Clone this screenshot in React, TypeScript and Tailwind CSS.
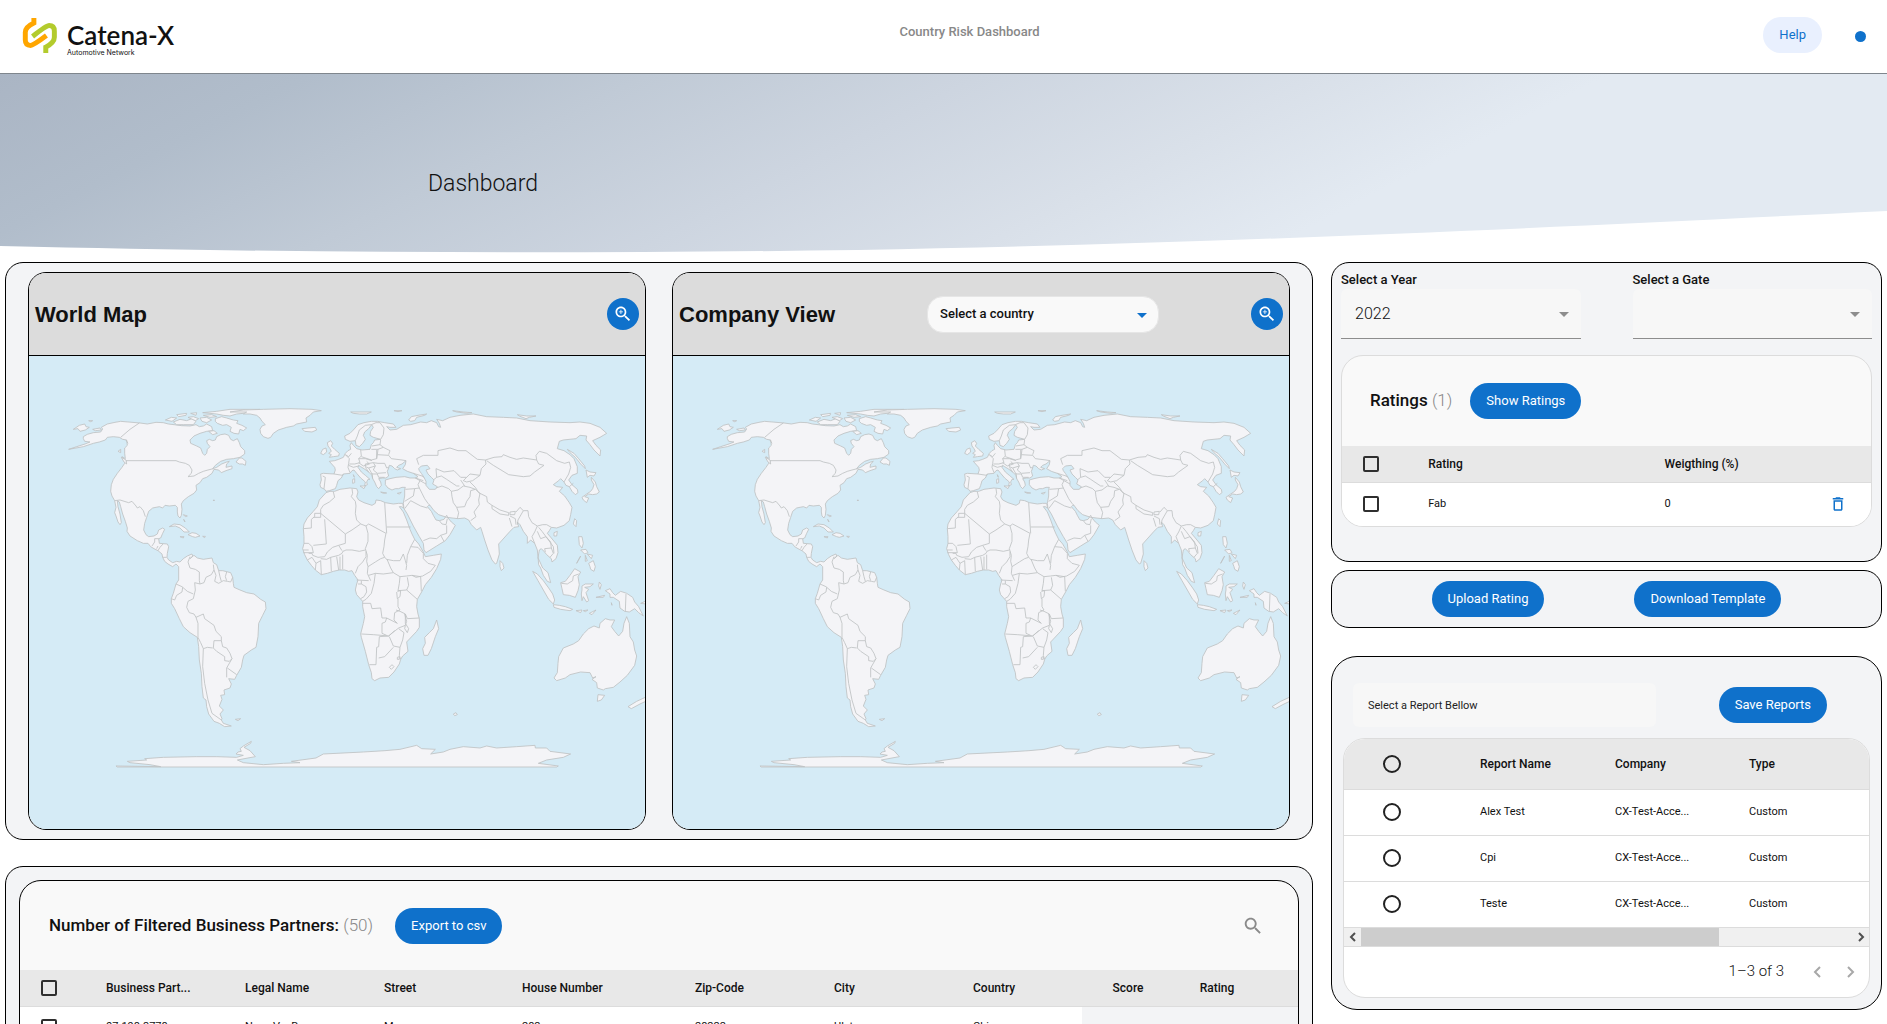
import type { ReactNode } from "react";

const LAND_WEST = [
  "M160,140 172,133 190,128 212,126 218,117 214,112 232,102 255,97 272,94 330,99 352,102 378,97 400,98 415,102 432,104 455,107 480,108 498,104 508,110 520,108 530,102 545,110 548,122 530,124 510,130 492,138 480,150 482,160 500,168 512,174 518,190 524,196 530,190 532,178 540,170 532,160 530,152 538,148 548,152 556,150 560,140 572,134 585,132 596,136 602,148 610,152 622,146 628,158 632,170 644,182 644,192 630,202 610,206 590,208 572,214 556,226 548,236 560,232 575,222 590,216 598,214 590,222 588,232 606,228 606,236 588,242 574,248 566,240 552,238 546,250 530,262 518,266 510,278 498,286 500,300 492,310 475,320 460,332 454,342 456,358 454,376 450,384 444,378 442,366 442,352 436,346 418,348 405,346 398,354 388,350 368,354 356,364 350,382 344,400 341,420 348,434 356,440 372,438 382,432 386,420 398,414 404,418 398,430 392,444 386,446 388,460 400,461 412,462 416,470 412,490 411,502 416,510 428,518 440,514 450,516 460,506 472,498 486,492 488,498 480,506 492,496 502,504 520,508 546,504 550,518 560,524 566,542 578,542 602,548 608,562 610,580 612,592 630,600 650,608 672,612 692,628 706,636 708,656 698,676 686,700 684,740 678,772 664,780 642,796 638,810 634,832 620,856 614,868 596,866 604,882 600,894 582,900 584,914 572,916 576,928 568,948 580,960 570,972 576,986 574,990 580,1000 604,1008 584,1010 568,1000 552,994 536,972 530,950 528,930 520,924 516,890 514,850 508,810 506,770 502,742 480,728 460,710 448,686 434,656 424,640 424,626 430,610 438,582 446,570 446,540 446,530 438,522 428,530 414,522 404,514 398,502 396,492 384,482 372,476 362,470 354,460 340,460 322,452 300,438 291,424 292,414 286,394 278,372 272,350 268,336 262,332 264,350 270,372 274,398 270,404 264,396 258,378 254,368 258,352 254,332 246,318 242,304 244,284 250,268 262,250 276,232 284,220 290,212 280,210 276,200 286,206 284,190 284,174 292,166 290,150 278,148 268,142 250,140 232,142 226,150 208,156 190,160 160,170 116,178 140,170 165,162 180,156 164,154 160,146Z",
  "M618,216 628,204 636,204 648,214 646,226 638,222 628,222Z",
  "M556,86 575,80 590,84 610,90 624,92 620,100 636,106 650,114 640,122 630,118 626,132 612,130 600,124 604,112 590,104 578,106 562,100 556,94Z",
  "M430,96 450,88 470,92 486,86 498,94 490,104 460,104 440,104Z",
  "M406,90 424,82 440,84 426,94Z M440,74 470,70 468,76 446,80Z M474,82 490,80 506,86 496,92Z M482,70 500,68 498,76Z",
  "M518,68 560,64 600,58 690,58 670,66 640,70 620,72 600,78 580,76 560,72Z",
  "M510,84 530,82 545,90 530,98 516,94Z M536,124 552,122 562,130 548,134Z M520,76 545,74 560,80 540,82Z",
  "M600,66 640,60 700,58 780,56 846,58 874,62 850,66 840,76 828,84 830,96 800,102 790,108 770,112 745,120 730,130 722,142 714,145 700,140 692,130 690,118 696,108 706,104 696,94 690,84 680,76 660,72 640,72 650,66Z",
  "M816,116 834,114 856,112 860,120 846,126 824,124Z",
  "M418,410 432,402 450,404 466,414 478,426 462,426 450,414 436,408Z M474,434 486,428 498,430 510,438 496,442 488,440Z M450,440 462,440 460,444Z M518,439 526,439 524,443Z M460,374 472,378 466,380Z M461,388 465,396Z",
  "M130,118 148,106 164,102 168,110 178,112 166,120 150,124 144,116Z M176,92 188,92 182,95Z M188,118 210,114 214,120 196,122Z M264,184 272,178 272,188Z M274,202 288,210 290,222 282,216Z M549,331 554,331Z",
  "M616,988 632,986 624,992Z",
  "M258,1128 392,1130 360,1124 300,1118 292,1114 350,1110 344,1106 400,1102 500,1100 560,1100 620,1102 640,1096 618,1092 624,1086 634,1084 630,1076 640,1068 664,1054 662,1060 642,1072 660,1082 676,1100 654,1104 622,1110 640,1118 700,1124 760,1120 810,1118 784,1114 858,1104 880,1092 960,1088 1000,1086 1065,1082 1110,1078 1160,1066 1175,1076 1216,1078 1202,1092 1240,1086 1260,1078 1300,1070 1350,1074 1370,1068 1400,1074 1460,1070 1515,1066 1516,1074 1550,1074 1560,1084 1622,1092 1600,1102 1550,1110 1525,1120 1585,1128 1580,1131 262,1131Z",
];

const BORDERS_WEST =
  "M328,99 300,118 272,142M288,150 294,160M290,212 438,212 448,216 466,220 478,226 486,240 484,250 474,260 492,258 506,250 520,244 534,240 550,236M254,332 270,330 296,338 306,334 318,348 322,354 330,350 340,362 346,380M366,468 374,456 374,446 386,446M384,482 390,472 400,461M398,502 410,502M380,476 384,468M480,500 474,516 480,534 496,538 508,546 508,572 510,582 522,578 528,562 544,554 552,540 550,524M552,540 558,556 554,574 566,580 580,572 592,574 602,576 608,562M566,542 570,560 574,574M590,546 586,560 590,572M510,582 494,578 496,600 490,626 474,634 470,652 478,668 492,672 498,682 504,700 504,742M438,582 456,590 472,604 490,612M458,592 456,606 440,616 434,630 424,626M498,682 520,672 524,686 552,706 558,724 574,740 574,752M504,742 512,758 520,776 532,772 548,774M550,774 552,752 574,752 578,770 590,774 600,790 606,806 598,814 584,812 584,800 560,784 550,774M606,806 590,834 590,862M592,834 620,854M520,776 518,830 524,880 534,930 546,970 574,990";

const LAND_EAST = [
  "M92,252 100,250 132,252 136,240 134,232 118,214 134,212 146,208 160,202 166,190 174,182 182,178 180,166 184,158 190,166 200,176 216,180 240,178 244,164 250,158 254,150 272,148 250,142 240,136 242,124 250,112 245,104 236,116 224,126 220,136 226,148 218,160 208,170 198,166 196,152 180,154 166,148 164,138 180,130 190,120 204,104 222,98 244,94 262,94 284,98 310,102 318,112 300,112 290,110 300,120 320,118 340,106 362,104 392,96 410,98 424,92 440,98 446,110 452,112 448,100 440,88 458,92 480,82 510,76 550,72 590,80 640,82 680,84 720,92 780,96 840,98 870,96 900,100 930,112 950,130 930,142 908,152 918,166 932,180 930,198 912,180 900,164 888,150 890,138 870,136 858,146 820,150 808,154 802,176 822,182 840,194 852,206 862,230 862,250 846,256 836,270 846,284 862,298 864,308 856,314 846,304 838,290 828,286 822,276 812,266 806,272 790,284 800,290 818,292 808,304 824,318 838,338 846,352 842,374 838,392 822,406 800,414 784,412 778,422 772,430 784,444 802,466 804,488 798,506 786,516 784,506 770,494 762,484 754,476 748,480 744,504 750,516 758,534 774,548 782,578 772,574 760,556 752,534 746,524 744,500 742,480 734,460 722,450 712,460 712,440 700,424 690,404 682,396 686,410 672,412 660,424 626,462 628,492 620,520 616,522 606,510 594,480 584,450 576,424 572,412 560,420 544,404 536,390 524,384 504,386 470,382 446,374 432,362 420,346 416,346 412,350 424,364 430,376 438,390 448,392 462,388 470,376 474,384 484,396 496,406 488,420 480,434 466,452 440,468 408,488 402,480 400,460 388,440 370,408 352,372 342,356 340,340 344,318 344,298 346,292 336,292 326,296 316,296 306,300 294,294 286,284 286,270 300,266 318,262 344,260 360,264 376,264 384,260 370,250 352,244 338,236 346,224 348,212 336,222 326,226 320,232 332,236 322,240 314,236 306,228 298,226 296,234 292,244 296,258 288,264 278,264 266,266 272,276 274,286 266,296 260,290 254,276 248,266 246,256 236,246 222,236 212,230 206,226 204,232 214,246 226,256 240,268 234,268 230,276 232,284 224,288 226,276 212,264 200,250 192,240 186,242 180,250 160,252 154,264 144,272 140,286 136,296 118,302 108,304 104,298 92,292 90,284 94,270Z",
  "M108,308 120,304 134,304 150,298 180,294 200,296 204,306 200,320 206,330 222,338 246,346 256,340 258,330 272,332 286,338 310,342 326,340 338,340 341,354 334,350 328,350 340,366 350,390 360,418 366,432 374,448 386,462 400,486 406,500 430,496 454,492 452,508 440,536 424,562 406,584 396,604 382,628 380,650 384,672 388,686 388,712 380,724 350,756 354,784 338,798 332,808 328,822 312,846 296,862 270,864 254,872 246,866 244,848 236,824 226,784 214,742 212,732 220,700 224,680 218,650 218,634 200,614 196,600 200,582 204,570 194,556 186,542 176,544 164,540 148,540 130,544 112,550 94,554 76,540 64,526 52,510 44,494 38,476 42,460 42,440 40,416 42,402 52,384 70,364 82,350 88,330Z",
  "M112,158 122,152 128,160 124,168 134,178 148,190 146,198 130,200 118,202 124,194 116,190 124,184 120,176 114,168Z M98,178 108,174 110,186 100,194 92,190Z",
  "M188,268 194,266 194,278 188,280Z M190,254 193,262Z M210,288 226,288 222,296Z M272,306 290,309 280,310Z M322,310 334,307 328,312Z",
  "M630,512 638,520 642,534 634,542 630,530Z",
  "M832,178 852,190 866,206 884,228 886,236 872,222 856,202 840,188Z M888,240 900,246 918,248 912,258 900,256 892,262Z M904,262 916,276 920,290 928,306 920,312 908,314 896,312 884,320 896,324 890,338 880,330 876,322 890,312 902,304 908,296 912,284 904,270Z",
  "M854,386 860,392 858,410 850,402Z M792,428 802,424 800,438 792,438Z",
  "M866,440 876,440 880,460 876,474 868,464Z M872,480 888,478 894,488 884,492Z M892,492 908,496 904,506Z M896,520 910,512 916,530 912,544 902,538 900,530Z M872,498 860,520Z M886,496 892,512 886,514Z",
  "M728,544 742,552 760,572 776,594 788,612 794,630 790,642 776,628 760,600 744,572Z M790,644 808,646 826,650 848,658 840,662 812,658 792,652Z",
  "M812,578 826,574 840,556 854,536 872,546 864,560 868,584 864,602 856,622 838,616 820,614 816,596Z",
  "M876,600 876,588 886,582 910,582 900,590 884,592 896,598 888,608 896,632 890,636 880,620 876,632 874,612Z M928,576 934,584 930,598 926,588Z M918,622 944,616 940,622Z M858,662 876,660 872,668Z M880,662 894,660 886,665Z M898,670 918,660 906,674Z M964,638 966,646Z",
  "M946,602 960,596 968,608 976,616 992,604 1010,610 1028,622 1034,636 1046,650 1060,678 1046,668 1034,656 1018,666 1004,664 990,654 988,634 970,622 960,622 960,612Z M1052,640 1070,632 1068,642Z",
  "M806,800 820,774 850,762 866,752 880,732 896,716 912,708 928,714 930,700 946,686 960,690 974,690 964,710 974,724 986,738 998,724 1002,700 1010,680 1018,700 1020,740 1030,756 1034,780 1040,798 1034,826 1012,856 990,876 970,892 946,896 940,900 922,894 920,878 906,868 918,860 908,864 900,848 872,846 840,854 826,864 800,872 792,864 802,848 804,820Z M924,914 944,916 934,930 922,934Z M1014,950 1040,934 1066,922 1080,916 1080,928 1050,942 1024,956Z",
  "M440,690 446,716 436,740 424,776 414,796 402,796 398,776 406,760 404,742 418,728 430,716Z M490,972 498,968 502,974 494,977Z",
  "M182,66 210,66 244,66 230,72 208,72 190,70Z M312,62 336,62 324,65Z M356,90 364,80 384,76 410,72 404,76 380,82 374,92 362,94Z M488,62 520,66 546,68 530,70 500,66Z M682,74 710,78 738,78 718,82 708,86 688,78Z",
];

const CASPIAN =
  "M386,236 394,228 412,226 420,236 408,240 414,252 424,262 432,270 428,282 442,290 436,298 418,298 408,286 408,274 402,262 394,250 388,242Z";

const BORDERS_EAST =
  "M130,306 134,322 118,336 100,346 92,358 92,370M92,370 74,370 74,380 64,388 64,414 40,416M92,370 92,382 70,382M104,388 109,462 70,466M92,370 166,432 186,420 212,402M186,296 188,310 184,320 196,334 198,348 196,370 200,390 212,402 228,408 236,402 288,430M284,338 290,430M290,411 362,411M288,430 284,450 282,470 278,490 284,502M228,408 234,430 234,454 226,476M226,480 208,484 186,480 168,480 160,484M166,432 166,460 146,466 128,472 112,486 104,500 84,502 68,496 66,490 56,490M42,460 56,460 66,470 70,488 40,488M40,480 56,480M52,510 66,502 78,520 76,540M78,520 92,512 94,554M92,506 110,508 122,502 146,496 156,490 160,482M122,502 124,544M140,500 146,540M150,500 150,540M158,494 158,538M146,466 156,482M196,550 204,530 218,516 228,500 228,484M226,476 232,496 230,514 234,530 232,550 242,572M234,530 256,516 272,506 284,502 292,510 302,534 310,548M236,556 256,550 280,552 310,548M200,570 236,572M204,582 214,582 214,572M214,582 228,590 230,606 222,620 212,626M256,550 252,580 244,610 228,628 218,634M290,508 310,512 330,512 340,492 346,512 350,526 348,540M310,548 330,560 350,558 366,556M374,448 362,470 352,496 350,520M362,470 384,472 400,490M400,490 400,506 414,520 436,526 422,544 398,558 378,562 366,556 392,560 394,604M352,562 356,586 350,600 382,628M330,560 328,580 324,602 350,600M322,604 332,602 330,620 322,626 320,606M324,626 324,650 330,660M318,660 330,664 346,672 352,686 388,684M330,660 314,668 312,690 322,700 290,684M218,640 242,640 246,656 272,654 276,684 290,684 286,696 276,700 276,730 290,736M214,732 250,734 296,738 314,722M296,738 308,728 326,714 346,706 350,694 344,672M346,672 346,700 356,716 352,728 344,716 346,706M326,716 342,728 338,750 330,772 310,768 298,740M296,738 268,740 266,770 260,772 258,824 238,824M266,804 284,800 310,772M330,772 328,796 332,808M298,832 306,824 312,830 304,838ZM322,802 328,800 328,808 322,808Z" +
  "M376,264 390,272 384,284 388,294 374,296 346,298M374,296 370,318 344,334M388,294 396,310 404,326 414,340 420,346M362,332 392,348 412,354M344,356 362,332M400,452 420,444 440,446 452,436 470,430 470,406M452,436 462,454M448,392 456,402 468,404 472,386M370,250 396,258 408,266M376,264 400,272M390,272 408,282M432,296 456,288 476,296 484,304 504,300 520,288 540,292 556,298 542,302 540,320 530,334 524,350 500,352 490,338 486,320 484,304M500,352 506,368 502,386M556,298 570,310 566,330 568,344 552,366 558,380 542,392M386,224 380,206 400,196 444,196 444,182 480,174 504,182 528,182 562,208 586,210 588,222 574,236 570,256 540,252 530,262 512,262 492,242 462,246 438,236 440,262 454,258 470,268 500,288 508,288M440,262 430,270M530,262 520,272 530,276 548,272 556,266 570,256M512,270 524,288M540,276 556,292 566,308 590,320 592,336 606,346M586,210 612,202 636,200 640,194 660,202 680,208 700,204 740,210 746,222 762,226 734,246 720,258 700,260 656,254 630,238 610,226 590,212M740,210 738,196 748,184 770,190 800,212 824,220 838,216 842,232 836,252 822,276M606,346 630,360 656,368 656,376 630,372 606,356ZM660,366 676,364 674,374 660,374ZM678,366 690,352 700,362 684,390 682,404M660,378 676,386 678,404M666,410 658,384M700,362 714,362 716,380 726,398 742,408 734,426 726,440 734,460M742,408 758,404 770,404 784,412M746,412 756,424 768,440 790,470 792,490M742,424 752,446 768,440 782,456 784,474 764,476 766,486M784,474 790,490 780,502M838,290 850,280M814,580 832,582 848,572 850,558 866,552M1008,612 1006,664" +
  "M132,252 158,256 160,252M98,258 106,262 102,296M166,194 178,206 176,220 174,232 180,248M184,190 176,200 166,194M212,180 214,198 206,206 210,218 194,222 178,222M260,180 260,206 244,210 214,200M206,206 226,206 246,212M206,218 220,228 238,222 230,214M176,226 190,232 206,228M226,222 250,218 256,228 236,234 226,230ZM256,228 250,240 262,250 288,248M250,218 264,220 284,220 290,234 296,232M226,232 236,246M236,234 246,252 262,252 266,262 284,262M246,250 248,266M260,206 262,194 296,196 304,206 336,210 348,212M262,194 264,178 280,172 300,182 296,194M244,178 264,178M246,168 270,164M272,150 270,164 280,172M196,152 202,138 208,120 226,106 244,104 258,98 270,98 282,114 280,134 272,148";

function WorldMap({ label }: { label: string }) {
  return (
    <svg
      viewBox="0 0 616 473"
      preserveAspectRatio="xMidYMid slice"
      role="img"
      aria-label={label}
      className="block w-full bg-[#d5ebf6]"
    >
      <g
        transform="translate(1 34) scale(.33333)"
        fill="#f4f4f7"
        stroke="#bfc3c4"
        strokeWidth="2.6"
        strokeLinejoin="round"
      >
        {LAND_WEST.map((d) => (
          <path key={d} d={d} />
        ))}
        <path d={BORDERS_WEST} fill="none" />
        <g transform="translate(780 0)">
          {LAND_EAST.map((d) => (
            <path key={d} d={d} />
          ))}
          <path d={BORDERS_EAST} fill="none" />
          <path d={CASPIAN} fill="#d5ebf6" />
        </g>
      </g>
    </svg>
  );
}

function PillButton({ children }: { children: ReactNode }) {
  return (
    <button
      type="button"
      className="h-9 rounded-[18px] bg-[#0f71cb] px-4 text-[13px] whitespace-nowrap text-white"
    >
      {children}
    </button>
  );
}

function ZoomButton({ label }: { label: string }) {
  return (
    <button
      type="button"
      aria-label={label}
      className="flex size-8 items-center justify-center rounded-full bg-[#0f71cb]"
    >
      <svg viewBox="0 0 24 24" className="size-5" fill="#fff">
        <path d="M15.5 14h-.79l-.28-.27C15.41 12.59 16 11.11 16 9.5 16 5.91 13.09 3 9.5 3S3 5.91 3 9.5 5.91 16 9.5 16c1.61 0 3.09-.59 4.23-1.57l.27.28v.79l5 4.99L20.49 19l-4.99-5zm-6 0C7.01 14 5 11.99 5 9.5S7.01 5 9.5 5 14 7.01 14 9.5 11.99 14 9.5 14z" />
        <path d="M12 10h-2v2H9v-2H7V9h2V7h1v2h2v1z" />
      </svg>
    </button>
  );
}

function Check({ label }: { label: string }) {
  return (
    <input
      type="checkbox"
      aria-label={label}
      className="block size-4 appearance-none rounded-[2px] border-2 border-[#2f2f2f]"
    />
  );
}

function Radio({ label }: { label: string }) {
  return (
    <input
      type="radio"
      name="report"
      aria-label={label}
      className="mx-auto block size-[18px] appearance-none rounded-full border-2 border-[#222]"
    />
  );
}

function Caret({ className }: { className: string }) {
  return (
    <svg viewBox="0 0 10 5" className={className} aria-hidden="true">
      <path d="M0 0h10L5 5z" fill="currentColor" />
    </svg>
  );
}

function FilledSelect({ id, label, options }: { id: string; label: string; options: string[] }) {
  return (
    <div>
      <label htmlFor={id} className="block text-[13px] leading-[18px] font-medium text-[#111]">
        {label}
      </label>
      <div className="relative">
        <select
          id={id}
          className="block h-[50px] w-full appearance-none rounded-t-md border-b border-[#8d8d8d] bg-[#f7f7f7] px-3.5 text-base font-light text-[#111]"
        >
          {options.map((o) => (
            <option key={o}>{o}</option>
          ))}
        </select>
        <Caret className="pointer-events-none absolute top-[23px] right-3 h-[5px] w-2.5 text-[#8d8d8d]" />
      </div>
    </div>
  );
}

const PARTNER_COLUMNS = [
  { name: "Business Part...", value: "07-198-3778" },
  { name: "Legal Name", value: "Nova Vw-Bra" },
  { name: "Street", value: "Ma" },
  { name: "House Number", value: "282" },
  { name: "Zip-Code", value: "28222" },
  { name: "City", value: "Ulsta" },
  { name: "Country", value: "China" },
];

const REPORTS = ["Alex Test", "Cpi", "Teste"];

export default function App() {
  return (
    <div className="h-screen overflow-hidden bg-white font-[Roboto,sans-serif] text-[#111]">
      <header className="grid h-[74px] grid-cols-[1fr_auto_1fr] border-b border-[#7f868d] bg-white">
        <a href="#home" className="flex items-start gap-2.5 pt-[17px] pl-[22px]">
          <svg viewBox="36 34 106 112" className="h-[37px] w-[35px]" fill="none" aria-hidden="true">
            <path
              d="M108 143v-18q26-14 26-30v-18q0-17-16-17-8 0-50 33"
              stroke="#b3cb2d"
              strokeWidth="15"
            />
            <path
              d="M72 37v15q-26 12-26 28v24q0 16 16 16 8 0 48-30"
              stroke="#ffa600"
              strokeWidth="15"
            />
          </svg>
          <span className="flex flex-col pt-1 font-[Lato,sans-serif]">
            <span className="text-[26px] leading-7 font-semibold">Catena-X</span>
            <span className="font-[Inter,sans-serif] text-[7px] leading-[7px]">Automotive Network</span>
          </span>
        </a>
        <p className="pt-[22px] pl-[52px] text-[13px] leading-5 font-medium text-[#888]">
          Country Risk Dashboard
        </p>
        <div className="flex items-start justify-end gap-[33px] pt-[17px] pr-[21px]">
          <button
            type="button"
            className="h-9 rounded-[18px] bg-[#e9f0fe] px-4 text-[13px] text-[#0f71cb]"
          >
            Help
          </button>
          <span className="mt-3.5 size-[11px] rounded-full bg-[#0f71cb]" />
        </div>
      </header>

      <div className="relative h-[179px] bg-[linear-gradient(153deg,#aab5c4_0%,#b1bdcb_14%,#c0cad6_29%,#cdd5e0_44%,#d9e0e9_59%,#e3eaf2_72%)]">
        <h1 className="pt-[92px] pl-[428px] text-[23px] leading-9 font-light">Dashboard</h1>
        <svg
          viewBox="0 0 1887 45"
          preserveAspectRatio="none"
          className="absolute inset-x-0 bottom-0 h-[45px] w-full"
          aria-hidden="true"
        >
          <path d="M0 38C300 45 560 46 858 42C1200 36 1500 22 1887 3V46H0Z" fill="#fff" />
        </svg>
      </div>

      <main className="mt-[9px] grid grid-cols-[1308fr_549fr] items-start gap-x-[18px] pr-[7px] pl-[5px]">
        <div className="flex flex-col gap-[26px]">
          <section className="grid grid-cols-2 gap-[26px] rounded-[18px] border border-black bg-[#f3f4f6] px-[22px] py-[9px]">
            <article className="overflow-hidden rounded-[18px] border border-black">
              <div className="flex h-[83px] items-center justify-between border-b border-black bg-[#dcdcdc] px-1.5">
                <h2 className="font-['Liberation_Sans',sans-serif] text-[22px] font-bold">World Map</h2>
                <ZoomButton label="Enlarge world map" />
              </div>
              <WorldMap label="World map" />
            </article>
            <article className="overflow-hidden rounded-[18px] border border-black">
              <div className="flex h-[83px] items-center justify-between border-b border-black bg-[#dcdcdc] px-1.5">
                <h2 className="font-['Liberation_Sans',sans-serif] text-[22px] font-bold">Company View</h2>
                <div className="relative w-[232px]">
                  <select
                    aria-label="Select a country"
                    className="block h-[37px] w-full appearance-none rounded-2xl border border-[#e6e6e6] bg-[#f9f9f9] px-3 text-[13px] font-medium"
                  >
                    <option>Select a country</option>
                  </select>
                  <Caret className="pointer-events-none absolute top-[17px] right-3 h-[5px] w-2.5 text-[#0f71cb]" />
                </div>
                <ZoomButton label="Enlarge company view" />
              </div>
              <WorldMap label="Company map" />
            </article>
          </section>

          <section className="rounded-[18px] border border-black bg-[#f3f4f6] px-[13px] py-[13px]">
            <div className="overflow-hidden rounded-[22px] border border-black bg-[#f9f9f9]">
              <div className="flex h-[89px] items-center pr-[34px] pl-[29px]">
                <h2 className="mr-[22px] text-[17px] font-medium">
                  Number of Filtered Business Partners: <span className="font-light text-[#888]">(50)</span>
                </h2>
                <PillButton>Export to csv</PillButton>
                <button type="button" aria-label="Search" className="ml-auto">
                  <svg viewBox="0 0 24 24" className="size-[22px]" fill="#8a8a8a">
                    <path d="M15.5 14h-.79l-.28-.27C15.41 12.59 16 11.11 16 9.5 16 5.91 13.09 3 9.5 3S3 5.91 3 9.5 5.91 16 9.5 16c1.61 0 3.09-.59 4.23-1.57l.27.28v.79l5 4.99L20.49 19l-4.99-5zm-6 0C7.01 14 5 11.99 5 9.5S7.01 5 9.5 5 14 7.01 14 9.5 11.99 14 9.5 14z" />
                  </svg>
                </button>
              </div>
              <table className="w-full table-fixed text-left text-[11px]">
                <colgroup>
                  <col className="w-[76px]" />
                  <col className="w-[139px]" />
                  <col className="w-[139px]" />
                  <col className="w-[138px]" />
                  <col className="w-[173px]" />
                  <col className="w-[139px]" />
                  <col className="w-[139px]" />
                  <col className="w-[119px]" />
                  <col className="w-[92px]" />
                  <col className="w-[86px]" />
                  <col className="w-[38px]" />
                </colgroup>
                <thead className="text-xs">
                  <tr className="h-9 border-b border-[#dcdcdc] bg-[#e8e8e8]">
                    <th className="pl-[21px]">
                      <Check label="Select all partners" />
                    </th>
                    {PARTNER_COLUMNS.map((c) => (
                      <th key={c.name} className="px-2.5 font-medium">
                        {c.name}
                      </th>
                    ))}
                    <th className="text-center font-medium">Score</th>
                    <th className="text-center font-medium">Rating</th>
                    <th />
                  </tr>
                </thead>
                <tbody>
                  <tr className="h-[42px] bg-white">
                    <td className="pl-[21px]">
                      <Check label="Select partner" />
                    </td>
                    {PARTNER_COLUMNS.map((c) => (
                      <td key={c.name} className="px-2.5">
                        {c.value}
                      </td>
                    ))}
                    <td colSpan={3} className="bg-[#f3f4f6]" />
                  </tr>
                </tbody>
              </table>
            </div>
          </section>
        </div>

        <aside className="flex flex-col">
          <section className="rounded-[18px] border border-black bg-[#f3f4f6] px-[9px] pt-2 pb-[34px]">
            <div className="grid grid-cols-2 gap-[52px]">
              <FilledSelect id="year" label="Select a Year" options={["2022"]} />
              <FilledSelect id="gate" label="Select a Gate" options={[""]} />
            </div>
            <div className="mt-4 overflow-hidden rounded-[22px] border border-[#dcdcdc] bg-[#f9f9f9]">
              <div className="flex h-[90px] items-center pl-7">
                <h2 className="mr-[18px] text-[17px] font-medium">
                  Ratings <span className="font-light text-[#888]">(1)</span>
                </h2>
                <PillButton>Show Ratings</PillButton>
              </div>
              <table className="w-full table-fixed text-left text-[11px]">
                <colgroup>
                  <col className="w-[76px]" />
                  <col className="w-[236px]" />
                  <col className="w-[150px]" />
                  <col className="w-[66px]" />
                </colgroup>
                <thead className="text-xs">
                  <tr className="h-9 border-b border-[#dcdcdc] bg-[#e8e8e8]">
                    <th className="pl-[21px]">
                      <Check label="Select all ratings" />
                    </th>
                    <th className="px-2.5 font-medium">Rating</th>
                    <th className="px-2.5 font-medium">Weigthing (%)</th>
                    <th />
                  </tr>
                </thead>
                <tbody>
                  <tr className="h-11 bg-white">
                    <td className="pl-[21px]">
                      <Check label="Select Fab" />
                    </td>
                    <td className="px-2.5">Fab</td>
                    <td className="px-2.5">0</td>
                    <td>
                      <button type="button" aria-label="Delete Fab" className="mx-auto block">
                        <svg viewBox="0 0 24 24" className="size-[18px]" fill="#0f71cb">
                          <path d="M6 19c0 1.1.9 2 2 2h8c1.1 0 2-.9 2-2V7H6v12zM8 9h8v10H8V9zm7.5-5-1-1h-5l-1 1H5v2h14V4z" />
                        </svg>
                      </button>
                    </td>
                  </tr>
                </tbody>
              </table>
            </div>
          </section>

          <section className="mt-2 flex justify-center gap-[90px] rounded-[18px] border border-black bg-[#f3f4f6] py-2.5">
            <PillButton>Upload Rating</PillButton>
            <PillButton>Download Template</PillButton>
          </section>

          <section className="mt-7 rounded-[26px] border border-black bg-[#f3f4f6] px-[11px] pt-[26px] pb-[11px]">
            <div className="flex items-center justify-between pr-[43px] pl-2.5">
              <input
                aria-label="Report name"
                defaultValue="Select a Report Bellow"
                className="h-[44px] w-[303px] rounded-md bg-[#f7f7f7] px-[15px] text-[11px] text-[#222]"
              />
              <PillButton>Save Reports</PillButton>
            </div>
            <div className="mt-[11px] overflow-hidden rounded-[22px] border border-[#dcdcdc] bg-white">
              <table className="w-full table-fixed text-left text-[11px]">
                <colgroup>
                  <col className="w-[96px]" />
                  <col className="w-[165px]" />
                  <col className="w-[134px]" />
                  <col className="w-[130px]" />
                </colgroup>
                <thead className="text-xs">
                  <tr className="h-[50px] border-b border-[#dcdcdc] bg-[#e8e8e8]">
                    <th>
                      <Radio label="No report" />
                    </th>
                    <th className="pl-10 font-medium">Report Name</th>
                    <th className="px-2.5 font-medium">Company</th>
                    <th className="px-2.5 font-medium">Type</th>
                  </tr>
                </thead>
                <tbody>
                  {REPORTS.map((name) => (
                    <tr key={name} className="h-[46px] border-b border-[#dcdcdc]">
                      <td>
                        <Radio label={name} />
                      </td>
                      <td className="pl-10">{name}</td>
                      <td className="px-2.5">CX-Test-Acce...</td>
                      <td className="px-2.5">Custom</td>
                    </tr>
                  ))}
                </tbody>
              </table>
              <div className="flex h-[18px] items-center bg-[#f0f0f0]">
                <button type="button" aria-label="Scroll left" className="flex w-[17px] justify-center">
                  <svg viewBox="0 0 8 10" className="h-2.5 w-2" fill="none" stroke="#505050" strokeWidth="2">
                    <path d="M6 1 2 5l4 4" />
                  </svg>
                </button>
                <div className="h-full flex-1">
                  <div className="h-full w-[73%] bg-[#cdcdcd]" />
                </div>
                <button type="button" aria-label="Scroll right" className="flex w-[17px] justify-center">
                  <svg viewBox="0 0 8 10" className="h-2.5 w-2" fill="none" stroke="#505050" strokeWidth="2">
                    <path d="m2 1 4 4-4 4" />
                  </svg>
                </button>
              </div>
              <div className="flex h-[51px] items-center justify-end border-t border-[#dcdcdc] pr-[13px]">
                <span className="mr-7 text-[15px] font-light">1–3 of 3</span>
                <button type="button" aria-label="Previous page" className="mr-5">
                  <svg viewBox="0 0 12 12" className="size-3" fill="none" stroke="#a8a8a8" strokeWidth="2">
                    <path d="M8 1 3 6l5 5" />
                  </svg>
                </button>
                <button type="button" aria-label="Next page">
                  <svg viewBox="0 0 12 12" className="size-3" fill="none" stroke="#a8a8a8" strokeWidth="2">
                    <path d="m4 1 5 5-5 5" />
                  </svg>
                </button>
              </div>
            </div>
          </section>
        </aside>
      </main>
    </div>
  );
}
